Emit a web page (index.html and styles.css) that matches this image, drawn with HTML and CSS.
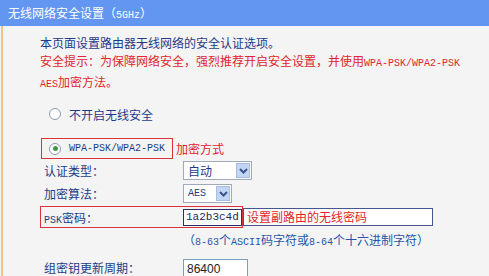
FILE: index.html
```html
<!DOCTYPE html>
<html>
<head>
  <meta charset="utf-8">
  <title>无线网络安全设置</title>
  <link rel="stylesheet" href="styles.css">
</head>
<body>
  <div class="title">无线网络安全设置（<span class="en">5GHz</span>）</div>

  <div class="content">
    <p>本页面设置路由器无线网络的安全认证选项。</p>
    <p class="tip">安全提示：为保障网络安全，强烈推荐开启安全设置，并使用<span class="en">WPA-PSK/WPA2-PSK</span></p>
    <p class="tip"><span class="en">AES</span>加密方法。</p>

    <div class="radio-row">
      <span class="radio"></span>不开启无线安全
    </div>

    <div class="radio-row second">
      <span class="mark">
        <span class="radio checked"></span><span class="en">WPA-PSK/WPA2-PSK</span>
      </span>
      <span class="note">加密方式</span>
    </div>

    <div class="form-row">
      <span class="label">认证类型：</span>
      <div class="select wide">
        <span class="value">自动</span>
        <span class="arrow"><svg width="9" height="6" viewBox="0 0 9 6"><polyline points="1,1 4.5,4.5 8,1" fill="none" stroke="#3a5688" stroke-width="2"/></svg></span>
      </div>
    </div>

    <div class="form-row">
      <span class="label">加密算法：</span>
      <div class="select narrow">
        <span class="value en">AES</span>
        <span class="arrow"><svg width="9" height="6" viewBox="0 0 9 6"><polyline points="1,1 4.5,4.5 8,1" fill="none" stroke="#3a5688" stroke-width="2"/></svg></span>
      </div>
    </div>

    <div class="form-row psk">
      <span class="mark">
        <span class="label"><span class="en">PSK</span>密码：</span>
        <input class="text key" type="text" value="1a2b3c4d">
      </span>
      <span class="annot">设置副路由的无线密码</span>
    </div>

    <div class="hint">（<span class="en">8-63</span>个<span class="en">ASCII</span>码字符或<span class="en">8-64</span>个十六进制字符）</div>

    <div class="form-row last">
      <span class="label">组密钥更新周期：</span>
      <input class="text period" type="text" value="86400">
    </div>
  </div>
</body>
</html>
```

FILE: styles.css
```css
body {
  margin: 0;
  background: #f4f4f4;
  font-family: "Noto Sans CJK SC", sans-serif;
  font-size: 12px;
  color: #1d3b87;
}

.en {
  font-family: "Liberation Mono", monospace;
  font-size: 10px;
}

.title {
  height: 26px;
  line-height: 26px;
  padding-left: 8px;
  background: #6396f1;
  color: #fff;
  white-space: nowrap;
}

.content {
  margin-left: 1px;
  border-left: 2px solid #f2c480;
  padding: 8px 0 0 37px;
  height: 242px;
}

p {
  margin: 0;
  line-height: 18px;
  white-space: nowrap;
}

.tip {
  color: #e0262a;
}

/* Radio rows */
.radio-row {
  display: flex;
  align-items: center;
  height: 20px;
  margin-top: 10px;
  padding-left: 9px;
  white-space: nowrap;
}

.radio-row.second {
  height: 21px;
  margin-top: 14px;
  padding-left: 1px;
}

.radio {
  width: 10px;
  height: 10px;
  border: 1px solid #8a9ab0;
  border-radius: 50%;
  background: #fff;
  margin-right: 8px;
  display: flex;
  align-items: center;
  justify-content: center;
}

.radio.checked::after {
  content: "";
  width: 5px;
  height: 5px;
  border-radius: 50%;
  background: #3f9a3f;
}

.mark {
  border: 1px solid #d9343c;
  box-sizing: border-box;
  display: flex;
  align-items: center;
}

.radio-row .mark {
  height: 21px;
  padding: 0 7px;
}

.note {
  color: #e0262a;
  margin-left: 3px;
}

/* Form rows */
.form-row {
  display: flex;
  align-items: center;
  height: 23px;
  padding-left: 4px;
  white-space: nowrap;
}

.label {
  width: 139px;
  flex: none;
}

.form-row.psk {
  height: 24px;
  padding-left: 0;
}

.psk .mark {
  height: 22px;
  padding-left: 3px;
}

.select {
  display: flex;
  align-items: center;
  height: 19px;
  box-sizing: border-box;
  border: 1px solid #9ea9ba;
  background: #fff;
}

.select.wide {
  width: 69px;
}

.select.narrow {
  width: 49px;
}

.select .value {
  flex: 1;
  padding-left: 4px;
}

.arrow {
  width: 14px;
  height: 15px;
  margin-right: 1px;
  box-sizing: border-box;
  background: #c4d4f4;
  border: 1px solid #a9bde0;
  display: flex;
  align-items: center;
  justify-content: center;
}

.text {
  box-sizing: border-box;
  margin: 0;
  background: #fff;
  outline: none;
}

.text.key {
  width: 59px;
  height: 17px;
  border: 1px solid #2b2f6e;
  padding: 0 0 0 2px;
  font-family: "Liberation Mono", monospace;
  font-size: 11px;
  color: #1d2b5a;
}

.annot {
  width: 190px;
  height: 18px;
  box-sizing: border-box;
  border: 1px solid #46568e;
  background: #fff;
  color: #e0262a;
  padding-left: 3px;
  line-height: 16px;
}

.hint {
  height: 22px;
  line-height: 22px;
  padding-left: 143px;
  color: #2356a8;
  white-space: nowrap;
}

.form-row.last {
  margin-top: 6px;
}

.form-row.last .label {
  margin-top: -2px;
}

.text.period {
  width: 65px;
  height: 19px;
  border: 1px solid #7f9db9;
  padding: 0 0 0 3px;
  font-family: "Liberation Sans", sans-serif;
  font-size: 12px;
  color: #222;
}
```
